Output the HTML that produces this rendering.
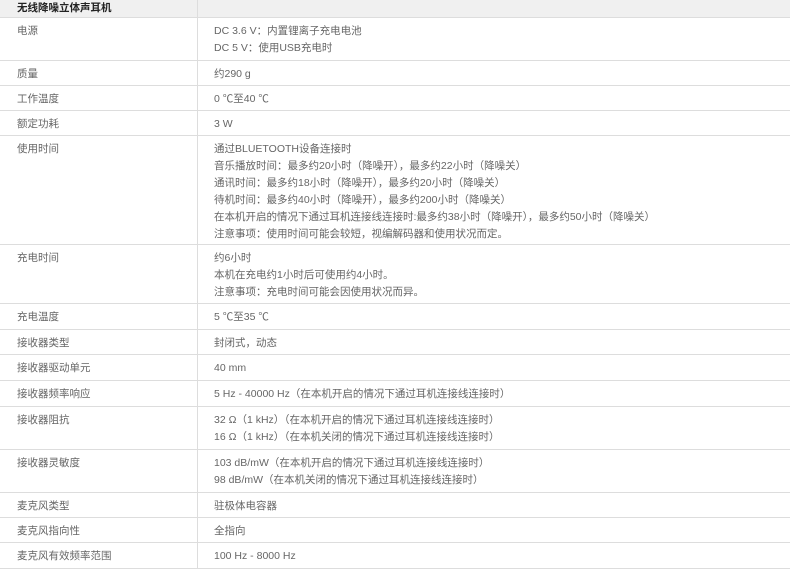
<!DOCTYPE html><html><head><meta charset="utf-8"><style>
body{margin:0;background:#fff;width:790px;height:571px;overflow:hidden;font-family:"Liberation Sans","Noto Sans CJK SC",sans-serif;font-size:10.5px;color:#666;}
.r{position:absolute;left:0;width:790px;border-bottom:1px solid #ddd;box-sizing:border-box}
.l{position:absolute;left:17px;top:5px;line-height:17px;white-space:nowrap}
.v{position:absolute;left:214px;top:5px;line-height:17px;white-space:nowrap}
.d{position:absolute;left:197px;top:0;width:1px;height:569px;background:#ddd}
.h{background:#f0f0f0;color:#222;font-weight:bold}
</style></head><body>
<div class="r h" style="top:0;height:18px"><div class="l" style="top:0">无线降噪立体声耳机</div></div>
<div class="r" style="top:18px;height:43px"><div class="l">电源</div><div class="v">DC 3.6 V：内置锂离子充电电池<br>DC 5 V：使用USB充电时</div></div>
<div class="r" style="top:61px;height:25px"><div class="l">质量</div><div class="v">约290 g</div></div>
<div class="r" style="top:86px;height:25px"><div class="l">工作温度</div><div class="v">0 ℃至40 ℃</div></div>
<div class="r" style="top:111px;height:25px"><div class="l">额定功耗</div><div class="v">3 W</div></div>
<div class="r" style="top:136px;height:109px"><div class="l">使用时间</div><div class="v">通过BLUETOOTH设备连接时<br>音乐播放时间：最多约20小时（降噪开），最多约22小时（降噪关）<br>通讯时间：最多约18小时（降噪开），最多约20小时（降噪关）<br>待机时间：最多约40小时（降噪开），最多约200小时（降噪关）<br>在本机开启的情况下通过耳机连接线连接时:最多约38小时（降噪开），最多约50小时（降噪关）<br>注意事项：使用时间可能会较短，视编解码器和使用状况而定。</div></div>
<div class="r" style="top:245px;height:59px"><div class="l">充电时间</div><div class="v">约6小时<br>本机在充电约1小时后可使用约4小时。<br>注意事项：充电时间可能会因使用状况而异。</div></div>
<div class="r" style="top:304px;height:26px"><div class="l">充电温度</div><div class="v">5 ℃至35 ℃</div></div>
<div class="r" style="top:330px;height:25px"><div class="l">接收器类型</div><div class="v">封闭式，动态</div></div>
<div class="r" style="top:355px;height:26px"><div class="l">接收器驱动单元</div><div class="v">40 mm</div></div>
<div class="r" style="top:381px;height:26px"><div class="l">接收器频率响应</div><div class="v">5 Hz - 40000 Hz（在本机开启的情况下通过耳机连接线连接时）</div></div>
<div class="r" style="top:407px;height:43px"><div class="l">接收器阻抗</div><div class="v">32 Ω（1 kHz）（在本机开启的情况下通过耳机连接线连接时）<br>16 Ω（1 kHz）（在本机关闭的情况下通过耳机连接线连接时）</div></div>
<div class="r" style="top:450px;height:43px"><div class="l">接收器灵敏度</div><div class="v">103 dB/mW（在本机开启的情况下通过耳机连接线连接时）<br>98 dB/mW（在本机关闭的情况下通过耳机连接线连接时）</div></div>
<div class="r" style="top:493px;height:25px"><div class="l">麦克风类型</div><div class="v">驻极体电容器</div></div>
<div class="r" style="top:518px;height:25px"><div class="l">麦克风指向性</div><div class="v">全指向</div></div>
<div class="r" style="top:543px;height:26px"><div class="l">麦克风有效频率范围</div><div class="v">100 Hz - 8000 Hz</div></div>
<div class="d"></div>
</body></html>
